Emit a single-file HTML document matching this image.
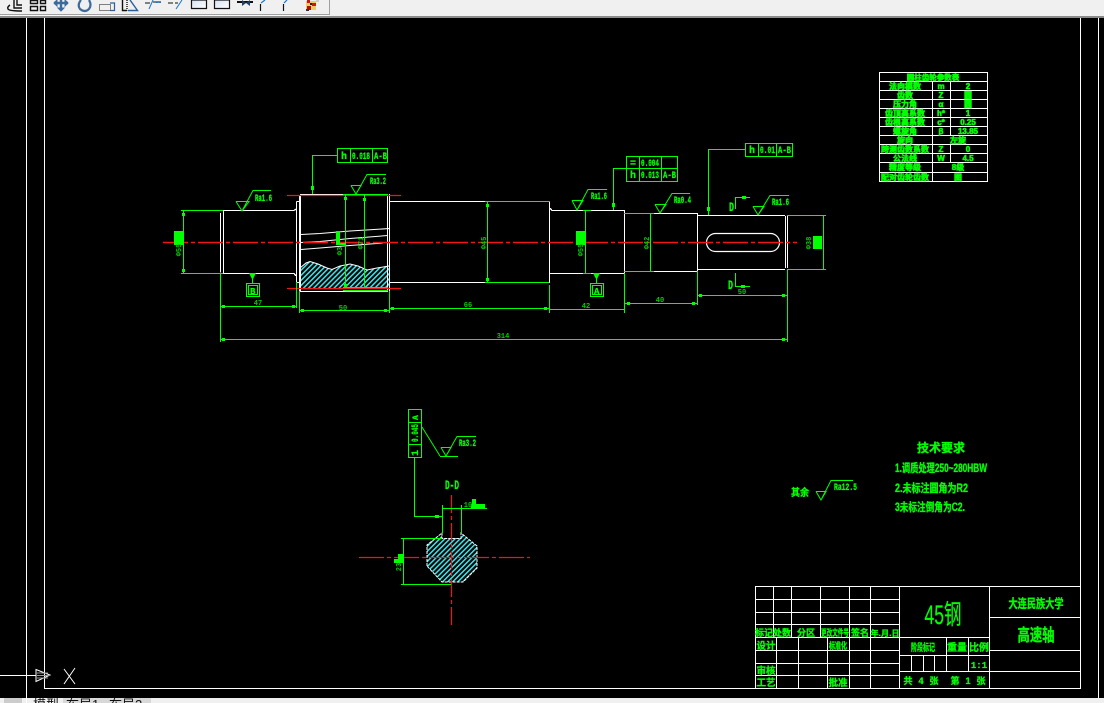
<!DOCTYPE html>
<html><head><meta charset="utf-8"><style>
html,body{margin:0;padding:0;background:#000;width:1104px;height:703px;overflow:hidden}
svg{display:block;position:absolute;left:0;top:0}
.c{font-family:"Liberation Sans","Noto Sans CJK SC",sans-serif;font-weight:700;fill:#0f0;stroke:#0f0;stroke-width:.35px}
.m{font-family:"Liberation Mono",monospace;font-weight:700;fill:#0f0;stroke:#0f0;stroke-width:.3px}
.d{font-family:"Liberation Mono",monospace;font-size:7px;font-weight:700;fill:#0c0}
.t{font-family:"Liberation Sans","Noto Sans CJK SC",sans-serif;font-weight:700;fill:#0f0;stroke:#0f0;stroke-width:.6px}
</style></head><body>
<svg width="1104" height="703" viewBox="0 0 1104 703" xmlns="http://www.w3.org/2000/svg">
<defs>
<pattern id="h" width="3.600" height="3.600" patternUnits="userSpaceOnUse" patternTransform="rotate(45)"><rect width="3.600" height="3.600" fill="#000"/><rect width="1.500" height="3.600" fill="#3fe8ee"/></pattern>
<linearGradient id="g" x1="0" y1="0" x2="1" y2="1"><stop offset="0" stop-color="#d4e2f2"/><stop offset="1" stop-color="#fff"/></linearGradient>
</defs>
<rect width="1104" height="703" fill="#000"/>
<!-- top chrome -->
<rect width="1104" height="16" fill="#f0f0f0"/>
<rect y="16" width="1104" height="2" fill="#8a8a8a"/>
<rect width="330" height="14" fill="#f0f0f0"/>
<rect y="14" width="330" height="1" fill="#a0a0a0"/>
<rect x="329" width="1" height="15" fill="#a0a0a0"/>
<rect x="0" y="15" width="329" height="1" fill="#fafafa"/>
<!-- toolbar icons -->
<g fill="none" stroke-width="1.4">
<path d="M17 0V5H22M14 0V8H22M10 5Q7 7 8 9Q9 11 22 11" stroke="#111"/>
<path d="M30.500 .5H37.500V3.500H30.500ZM40.500 .5H45.500V3.500H40.500ZM30.500 6.500H37.500V10.500H30.500ZM40.500 6.500H45.500V10.500H40.500Z" stroke="#111"/>
<path d="M54 3H68M61 0V9" stroke="#3c6a9c" stroke-width="2.400"/>
<path d="M56 3L54 3M61 11L58 8H64ZM54 3L57 0V6ZM68 3L65 0V6Z" fill="#3c6a9c" stroke="#3c6a9c" stroke-width="1"/>
<path d="M81 0Q77 5 80 9Q85 13 89 9Q92 5 89 0" stroke="#3c6a9c" stroke-width="2.200"/>
<path d="M99.500 4.500H110.500V10.500H99.500Z" stroke="#111" stroke-dasharray="1 1" stroke-width="1"/>
<path d="M110 3H114.500V10.500H110" stroke="#2a5f9c" stroke-width="1.200"/>
<path d="M122.500 0V10.500H127" stroke="#111"/><path d="M127 0V10.500" stroke="#111" stroke-dasharray="1 1"/>
<path d="M130 0L137.500 10.500H128" stroke="#2a5f9c"/>
<path d="M145 3H150M153 2H161" stroke="#111" stroke-width="1"/><path d="M156 2.500H161" stroke="#1677d6" stroke-dasharray="2 1" stroke-width="1"/><path d="M149 9L153 0" stroke="#1677d6" stroke-width="1"/>
<path d="M168 3H173M175 3H178" stroke="#111" stroke-width="1"/><path d="M176 9L182 0" stroke="#1677d6" stroke-width="1"/>
</g>
<path d="M191.500 0V8.500H206.500V0Z" fill="url(#g)" stroke="#111" stroke-width="1.200"/>
<path d="M214.500 0V8.500H229.500V0Z" fill="url(#g)" stroke="#111" stroke-width="1.200"/>
<path d="M237 2H253" stroke="#111" stroke-width="2"/><path d="M242 0L246 3L250 0V6L246 3L242 6Z" fill="#1e3f66"/>
<path d="M260.500 4V11" stroke="#111" stroke-width="1.200"/><path d="M261 3L265 0" stroke="#1677d6" stroke-width="1.200"/>
<path d="M283.500 4V11" stroke="#111" stroke-width="1.200"/><path d="M284 3L287 0" stroke="#1677d6" stroke-width="1.200"/>
<g>
<rect x="306" y="1" width="10" height="9" fill="#e8d060"/>
<rect x="307" y="0" width="3" height="3" fill="#c81818"/><rect x="312" y="3" width="4" height="3" fill="#c81818"/><rect x="307" y="6" width="4" height="4" fill="#b01010"/><rect x="310" y="3" width="2" height="2" fill="#222"/><rect x="306" y="9" width="3" height="2" fill="#333"/><rect x="316" y="0" width="3" height="2" fill="#ccc"/>
</g>
<!-- bottom tabs -->
<rect y="698" width="1104" height="5" fill="#f0f0f0"/>
<rect x="4" y="698" width="18" height="5" fill="#ccc"/>
<rect x="63" y="698" width="88" height="5" fill="#d8d8d8"/>
<text x="33" y="709" font-size="13" font-family="'Liberation Sans','Noto Sans CJK SC',sans-serif" fill="#111">模型</text>
<text x="66" y="709" font-size="13" font-family="'Liberation Sans','Noto Sans CJK SC',sans-serif" fill="#111">布局1</text>
<text x="109" y="709" font-size="13" font-family="'Liberation Sans','Noto Sans CJK SC',sans-serif" fill="#111">布局2</text>
<!-- frames -->
<g stroke="#fff" stroke-width="1" fill="none" shape-rendering="crispEdges">
<path d="M26.500 18V703M44.500 18V688.500H1080.500V18M1098.500 18V698"/>
<!-- title block -->
<path d="M755.500 688V586.500H1080M773.500 586V637M791.500 586V637M820.500 586V637M849.500 586V688M870.500 586V688M899.500 586V688M989.500 586V688"/>
<path d="M755 599.500H899M755 612.500H899M755 624.500H899M755 637.500H989M755 650.500H899M755 663.500H899M755 675.500H899"/>
<path d="M776.500 637V688M798.500 637V688M827.500 637V688"/>
<path d="M899 655.500H989M899 671.500H1080M946.500 637V671M968.500 637V671M911.500 655V671M923.500 655V671M934.500 655V671"/>
<path d="M989 617.500H1080M989 650.500H1080"/>
<!-- param table -->
<path d="M879.500 72.500H987.500V181.500H879.500Z"/>
<path d="M880 81.500H987M880 90.500H987M880 99.500H987M880 108.500H987M880 117.500H987M880 126.500H987M880 135.500H987M880 144.500H987M880 153.500H987M880 162.500H987M880 172.500H987"/>
<path d="M932.500 81V181M950.500 81V135M950.500 144V162"/>
</g>
<!-- UCS -->
<g stroke="#fff" fill="none" stroke-width="1">
<path d="M0 675.500H36M36 669.500L50 675L36 681.500Z"/>
<path d="M37 673H48M37 675.500H50M37 678H48" stroke="#999"/>
<path d="M64 669L75 684M75 668L64 684"/>
</g>
<!-- hatched regions -->
<path d="M300 268L306 263L310 261.500L318 264L327 268L332 269.500L340 266L350 264L358 266L367 270L377 268L389 266V288H300Z" fill="url(#h)"/>
<path d="M300 268L306 263L310 261.500L318 264L327 268L332 269.500L340 266L350 264L358 266L367 270L377 268L389 266" fill="none" stroke="#fff" stroke-width="1"/>
<path d="M427 545L442 533V538H461V533L477 546V568L463 582H442L427 566Z" fill="url(#h)"/>
<path d="M427 566V545L442 533V538.500H461V533L477 546V568L463 582H442L427 566" fill="none" stroke="#fff" stroke-width="1" stroke-dasharray="3 1"/>
<!-- shaft white -->
<g stroke="#fff" stroke-width="1.200" fill="none" shape-rendering="crispEdges">
<path d="M220.500 213V272.500M223.500 210.500V273.500"/>
<path d="M223 210.500H294L296 209M223 273.500H294L296 276"/>
<path d="M296.500 201.500V282.500H299M296.500 201.500H299"/>
<path d="M299.500 195V291M300.500 194V291.500"/>
<path d="M300 194.500H388M300 291.500H388"/>
<path d="M387.500 194V291M389.500 194V291"/>
<path d="M390 201.500H485M390 282.500H485"/>
<path d="M549.500 201.500V283"/>
<path d="M550 208L552 210.500H624M550 273.500H624"/>
<path d="M624.500 210V273"/>
<path d="M654 213.500H697M654 271.500H697"/>
<path d="M697.500 213V271M697 215.500H785M697 269.500H785"/>
<path d="M785.500 216V268M787.500 216V268"/>
</g>
<g stroke="#fff" stroke-width="1" fill="none">
<path d="M301 234.500L320 233.500L350 231L390 228.500M301 242.500L320 241.500L350 238.500L388 235.500M301 249.500L320 248L350 245.500L383 243"/>
<rect x="706.500" y="233.500" width="73" height="18" rx="9" ry="9" stroke-width="1.200"/>
</g>
<!-- red centers -->
<g stroke="#f01414" stroke-width="1.200" fill="none">
<path d="M163 242.500H797" stroke-dasharray="25 3 4 3" stroke-width="1.400"/>
<path d="M287 195.500H401M287 288.500H401"/>
<path d="M359 557.500H530" stroke-dasharray="25 3 4 3"/>
<path d="M451.500 495V627" stroke-dasharray="18 3 4 3"/>
</g>
<!-- green dims -->
<g stroke="#0f0" stroke-width="1" fill="none" shape-rendering="crispEdges">
<path d="M181 210.500H223M181 273.500H223M183.500 210V273"/>
<path d="M220.500 273V342M296.500 282V308M220 306.500H296M299.500 291V313M389.500 291V313M299 310.500H389M389 308.500H549M549.500 285V313M549 309.500H624M624.500 273V313M624 303.500H697M697.500 271V305M697 295.500H787M787.500 269V342M220 339.500H787"/>
<path d="M485 201.500H549M485 282.500H549M487.500 201V282"/>
<path d="M343 194.500H388M343 290.500H388M343 287.500H388M345.500 195V288M364.500 195V288"/>
<path d="M337.500 148.500H387.500V162.500H337.500ZM350.500 148V162M372.500 148V162M312 155.500H337M312.500 155V194"/>
<path d="M585.500 210V273M583 210.500H591M583 273.500H591"/>
<path d="M626.500 156.500H677.500V181.500H626.500ZM626 168.500H678M639.500 156V181M661.500 156V181M613 168.500H626M613.500 168V210"/>
<path d="M624 213.500H654M624 271.500H654M650.500 213V271"/>
<path d="M745.500 143.500H792.500V156.500H745.500ZM758.500 143V156M776.500 143V156M708 149.500H745M708.500 149V215"/>
<path d="M735.500 197V209M735 197.500H750M735.500 273V286M735 286.500H750"/>
<path d="M787 215.500H826M787 269.500H826M823.500 215V269"/>
<path d="M246.500 283.500H259.500V296.500H246.500ZM248.500 285.500H257.500V294.500H248.500ZM252.500 277V283"/>
<path d="M590.500 283.500H603.500V296.500H590.500ZM592.500 285.500H601.500V294.500H592.500ZM596.500 277V283"/>
<path d="M408.500 409.500H421.500V457.500H408.500ZM408 422.500H422M408 444.500H422M414.500 457V516.500H442"/>
<path d="M442.500 505V533M461.500 505V533M442 508.500H487"/>
<path d="M401 538.500H442M401 584.500H451M403.500 538V584"/>
<path d="M440 456.500H458M441 447.500H451"/>
</g>
<!-- surface symbols -->
<g stroke="#0f0" stroke-width="1" fill="none">
<path d="M236 201.500H249L242 211L236 201.500M242 211L253 190.500H271"/>
<path d="M351 185.500H361L356 194L351 185.500M356 194L367 174.500H386"/>
<path d="M572 200.500H583L577 210L572 200.500M577 210L588 189.500H607"/>
<path d="M655 204.500H666L660 213L655 204.500M660 213L672 193.500H690"/>
<path d="M753 206.500H764L758 215L753 206.500M758 215L770 195.500H789"/>
<path d="M422 427L440 456M441 447.500H451L446 456L441 447.500M446 456L457 436.500H476"/>
<path d="M816 491.500H826L821 500L816 491.500M821 500L831 480.500H853"/>
</g>
<!-- solid blobs -->
<g fill="#0f0">
<rect x="174" y="231" width="10" height="14"/>
<rect x="336" y="231" width="4" height="14"/><rect x="336" y="243" width="9" height="2"/>
<rect x="576" y="231" width="10" height="14"/>
<rect x="813" y="236" width="9" height="13"/>
<path d="M249 273H256L252.500 280ZM593 273H600L596.500 280Z"/>
<rect x="471" y="504" width="14" height="4"/><rect x="472" y="499" width="4" height="5"/>
<rect x="398" y="554" width="5" height="5"/><rect x="394" y="559" width="9" height="4"/>
<!-- markers -->
<rect x="311" y="186" width="3" height="4"/><rect x="612" y="203" width="3" height="4"/><rect x="707" y="207" width="3" height="4"/><rect x="742" y="196" width="4" height="3"/><rect x="741" y="285" width="4" height="3"/><rect x="435" y="515" width="4" height="3"/>
<rect x="222" y="305" width="3" height="3"/><rect x="292" y="305" width="3" height="3"/><rect x="301" y="309" width="3" height="3"/><rect x="384" y="309" width="3" height="3"/><rect x="391" y="307" width="3" height="3"/><rect x="544" y="307" width="3" height="3"/><rect x="627" y="302" width="3" height="3"/><rect x="692" y="302" width="3" height="3"/><rect x="699" y="294" width="3" height="3"/><rect x="782" y="294" width="3" height="3"/><rect x="222" y="338" width="3" height="3"/><rect x="782" y="338" width="3" height="3"/>
<rect x="182" y="213" width="3" height="3"/><rect x="182" y="269" width="3" height="3"/><rect x="486" y="204" width="3" height="3"/><rect x="486" y="278" width="3" height="3"/><rect x="344" y="197" width="3" height="3"/><rect x="363" y="198" width="3" height="3"/><rect x="344" y="284" width="3" height="3"/>
</g>
<!-- dim text -->
<text class="d" x="258" y="305" text-anchor="middle">47</text>
<text class="d" x="343" y="310" text-anchor="middle">50</text>
<text class="d" x="468" y="307" text-anchor="middle">66</text>
<text class="d" x="586" y="308" text-anchor="middle">42</text>
<text class="d" x="660" y="302" text-anchor="middle">40</text>
<text class="d" x="742" y="294" text-anchor="middle">50</text>
<text class="d" x="503" y="338" text-anchor="middle">314</text>
<text class="d" x="468" y="507" text-anchor="middle">10</text>
<text class="d" transform="translate(181,250) rotate(-90)" text-anchor="middle">Φ55</text>
<text class="d" transform="translate(342,251) rotate(-90)" text-anchor="middle">Φ3</text>
<text class="d" transform="translate(363,243) rotate(-90)" text-anchor="middle">Φ71</text>
<text class="d" transform="translate(486,243) rotate(-90)" text-anchor="middle">Φ45</text>
<text class="d" transform="translate(583,250) rotate(-90)" text-anchor="middle">Φ55</text>
<text class="d" transform="translate(649,243) rotate(-90)" text-anchor="middle">Φ42</text>
<text class="d" transform="translate(811,243) rotate(-90)" text-anchor="middle">Φ38</text>
<text class="d" transform="translate(401,567) rotate(-90)" text-anchor="middle">23</text>
<!-- Ra text -->
<g font-size="10">
<text class="m" x="255" y="201" textLength="17" lengthAdjust="spacingAndGlyphs">Ra1.6</text>
<text class="m" x="370" y="184" textLength="16" lengthAdjust="spacingAndGlyphs">Ra3.2</text>
<text class="m" x="591" y="199" textLength="16" lengthAdjust="spacingAndGlyphs">Ra1.6</text>
<text class="m" x="674" y="203" textLength="17" lengthAdjust="spacingAndGlyphs">Ra0.4</text>
<text class="m" x="772" y="205" textLength="17" lengthAdjust="spacingAndGlyphs">Ra1.6</text>
<text class="m" x="459" y="446" textLength="17" lengthAdjust="spacingAndGlyphs">Ra3.2</text>
<text class="m" x="834" y="490" textLength="23" lengthAdjust="spacingAndGlyphs">Ra12.5</text>
<!-- tolerance -->
<text class="m" x="341" y="159">h</text>
<text class="m" x="352" y="159" textLength="18" lengthAdjust="spacingAndGlyphs">0.018</text>
<text class="m" x="374" y="159" textLength="13" lengthAdjust="spacingAndGlyphs">A-B</text>
<text class="m" x="630" y="166">=</text>
<text class="m" x="641" y="166" textLength="18" lengthAdjust="spacingAndGlyphs">0.004</text>
<text class="m" x="630" y="178">h</text>
<text class="m" x="641" y="178" textLength="18" lengthAdjust="spacingAndGlyphs">0.013</text>
<text class="m" x="663" y="178" textLength="13" lengthAdjust="spacingAndGlyphs">A-B</text>
<text class="m" x="749" y="153">h</text>
<text class="m" x="760" y="153" textLength="15" lengthAdjust="spacingAndGlyphs">0.01</text>
<text class="m" x="778" y="153" textLength="13" lengthAdjust="spacingAndGlyphs">A-B</text>
<text class="m" transform="translate(418,456) rotate(-90)">1</text>
<text class="m" transform="translate(418,442) rotate(-90)" textLength="18" lengthAdjust="spacingAndGlyphs">0.045</text>
<text class="m" transform="translate(418,420) rotate(-90)" font-size="8">A</text>
<!-- section letters -->
<text class="m" x="729" y="211" font-size="13" textLength="5" lengthAdjust="spacingAndGlyphs">D</text>
<text class="m" x="728" y="289" font-size="13" textLength="5" lengthAdjust="spacingAndGlyphs">D</text>
<text class="m" x="445" y="489" font-size="13" textLength="14" lengthAdjust="spacingAndGlyphs">D-D</text>
<text class="m" x="250" y="294" font-size="9">B</text>
<text class="m" x="594" y="294" font-size="9">A</text>
</g>
<!-- param table text -->
<g>
<text class="t" x="933" y="80" font-size="7.500" text-anchor="middle">圆柱齿轮参数表</text>
<text class="t" x="905" y="89" font-size="8" text-anchor="middle">法向模数</text><text class="t" x="941" y="89" font-size="8" text-anchor="middle">m</text><text class="t" x="968" y="89" font-size="8" text-anchor="middle">2</text>
<text class="t" x="905" y="98" font-size="8" text-anchor="middle">齿数</text><text class="t" x="941" y="98" font-size="8" text-anchor="middle">Z</text><text class="t" x="968" y="98" font-size="8" text-anchor="middle">圆</text>
<text class="t" x="905" y="107" font-size="8" text-anchor="middle">压力角</text><text class="t" x="941" y="107" font-size="8" text-anchor="middle">α</text><text class="t" x="968" y="107" font-size="8" text-anchor="middle">圆</text>
<text class="t" x="905" y="116" font-size="8" text-anchor="middle">齿顶高系数</text><text class="t" x="941" y="116" font-size="8" text-anchor="middle">h*</text><text class="t" x="968" y="116" font-size="8" text-anchor="middle">1</text>
<text class="t" x="905" y="125" font-size="8" text-anchor="middle">齿根高系数</text><text class="t" x="941" y="125" font-size="8" text-anchor="middle">c*</text><text class="t" x="968" y="125" font-size="8" text-anchor="middle">0.25</text>
<text class="t" x="905" y="134" font-size="8" text-anchor="middle">螺旋角</text><text class="t" x="941" y="134" font-size="8" text-anchor="middle">β</text><text class="t" x="968" y="134" font-size="8" text-anchor="middle">13.85</text>
<text class="t" x="905" y="143" font-size="8" text-anchor="middle">旋向</text><text class="t" x="958" y="143" font-size="8" text-anchor="middle">左旋</text>
<text class="t" x="905" y="152" font-size="8" text-anchor="middle">跨测齿数系数</text><text class="t" x="941" y="152" font-size="8" text-anchor="middle">Z</text><text class="t" x="968" y="152" font-size="8" text-anchor="middle">0</text>
<text class="t" x="905" y="161" font-size="8" text-anchor="middle">公法线</text><text class="t" x="941" y="161" font-size="8" text-anchor="middle">W</text><text class="t" x="968" y="161" font-size="8" text-anchor="middle">4.5</text>
<text class="t" x="905" y="170" font-size="8" text-anchor="middle">精度等级</text><text class="t" x="958" y="170" font-size="8" text-anchor="middle">8级</text>
<text class="t" x="905" y="180" font-size="8" text-anchor="middle">配对齿轮齿数</text><text class="t" x="958" y="180" font-size="8" text-anchor="middle">图</text>
</g>
<!-- tech notes -->
<text class="c" x="941" y="452" font-size="12" text-anchor="middle">技术要求</text>
<text class="c" x="895" y="472" font-size="11.500" textLength="92" lengthAdjust="spacingAndGlyphs">1.调质处理250~280HBW</text>
<text class="c" x="895" y="492" font-size="11.500" textLength="73" lengthAdjust="spacingAndGlyphs">2.未标注圆角为R2</text>
<text class="c" x="895" y="511" font-size="11.500" textLength="70" lengthAdjust="spacingAndGlyphs">3未标注倒角为C2.</text>
<text class="c" x="791" y="496" font-size="10" textLength="18" lengthAdjust="spacingAndGlyphs">其余</text>
<!-- title block text -->
<text x="943" y="624" font-size="27" class="c" style="font-weight:400;stroke-width:.2px" text-anchor="middle" textLength="37" lengthAdjust="spacingAndGlyphs">45钢</text>
<text x="1036" y="608" font-size="12.500" class="c" text-anchor="middle" textLength="55" lengthAdjust="spacingAndGlyphs">大连民族大学</text>
<text x="1036" y="641" font-size="17" class="c" text-anchor="middle" textLength="37" lengthAdjust="spacingAndGlyphs">高速轴</text>
<text class="c" x="764" y="636" font-size="9" text-anchor="middle">标记</text>
<text class="c" x="782" y="636" font-size="9" text-anchor="middle">处数</text>
<text class="c" x="806" y="636" font-size="9" text-anchor="middle">分区</text>
<text class="c" x="835" y="636" font-size="9" text-anchor="middle" textLength="28" lengthAdjust="spacingAndGlyphs">更改文件号</text>
<text class="c" x="860" y="636" font-size="9" text-anchor="middle">签名</text>
<text class="c" x="885" y="636" font-size="8" text-anchor="middle" textLength="29" lengthAdjust="spacing">年.月.日</text>
<text class="c" x="766" y="649" font-size="9.500" text-anchor="middle">设计</text>
<text class="c" x="838" y="649" font-size="9" text-anchor="middle" textLength="18" lengthAdjust="spacingAndGlyphs">标准化</text>
<text class="c" x="766" y="674" font-size="9.500" text-anchor="middle">审核</text>
<text class="c" x="766" y="686" font-size="9.500" text-anchor="middle">工艺</text>
<text class="c" x="838" y="686" font-size="9.500" text-anchor="middle">批准</text>
<text class="c" x="923" y="651" font-size="10" text-anchor="middle" textLength="24" lengthAdjust="spacingAndGlyphs">阶段标记</text>
<text class="c" x="957" y="651" font-size="10" text-anchor="middle">重量</text>
<text class="c" x="979" y="651" font-size="10" text-anchor="middle">比例</text>
<text class="m" x="979" y="668" font-size="9" text-anchor="middle">1:1</text>
<text class="c" x="908" y="684" font-size="9" text-anchor="middle">共</text>
<text class="c" x="921" y="684" font-size="9" text-anchor="middle">4</text>
<text class="c" x="934" y="684" font-size="9" text-anchor="middle">张</text>
<text class="c" x="955" y="684" font-size="9" text-anchor="middle">第</text>
<text class="c" x="968" y="684" font-size="9" text-anchor="middle">1</text>
<text class="c" x="981" y="684" font-size="9" text-anchor="middle">张</text>
</svg>
</body></html>
